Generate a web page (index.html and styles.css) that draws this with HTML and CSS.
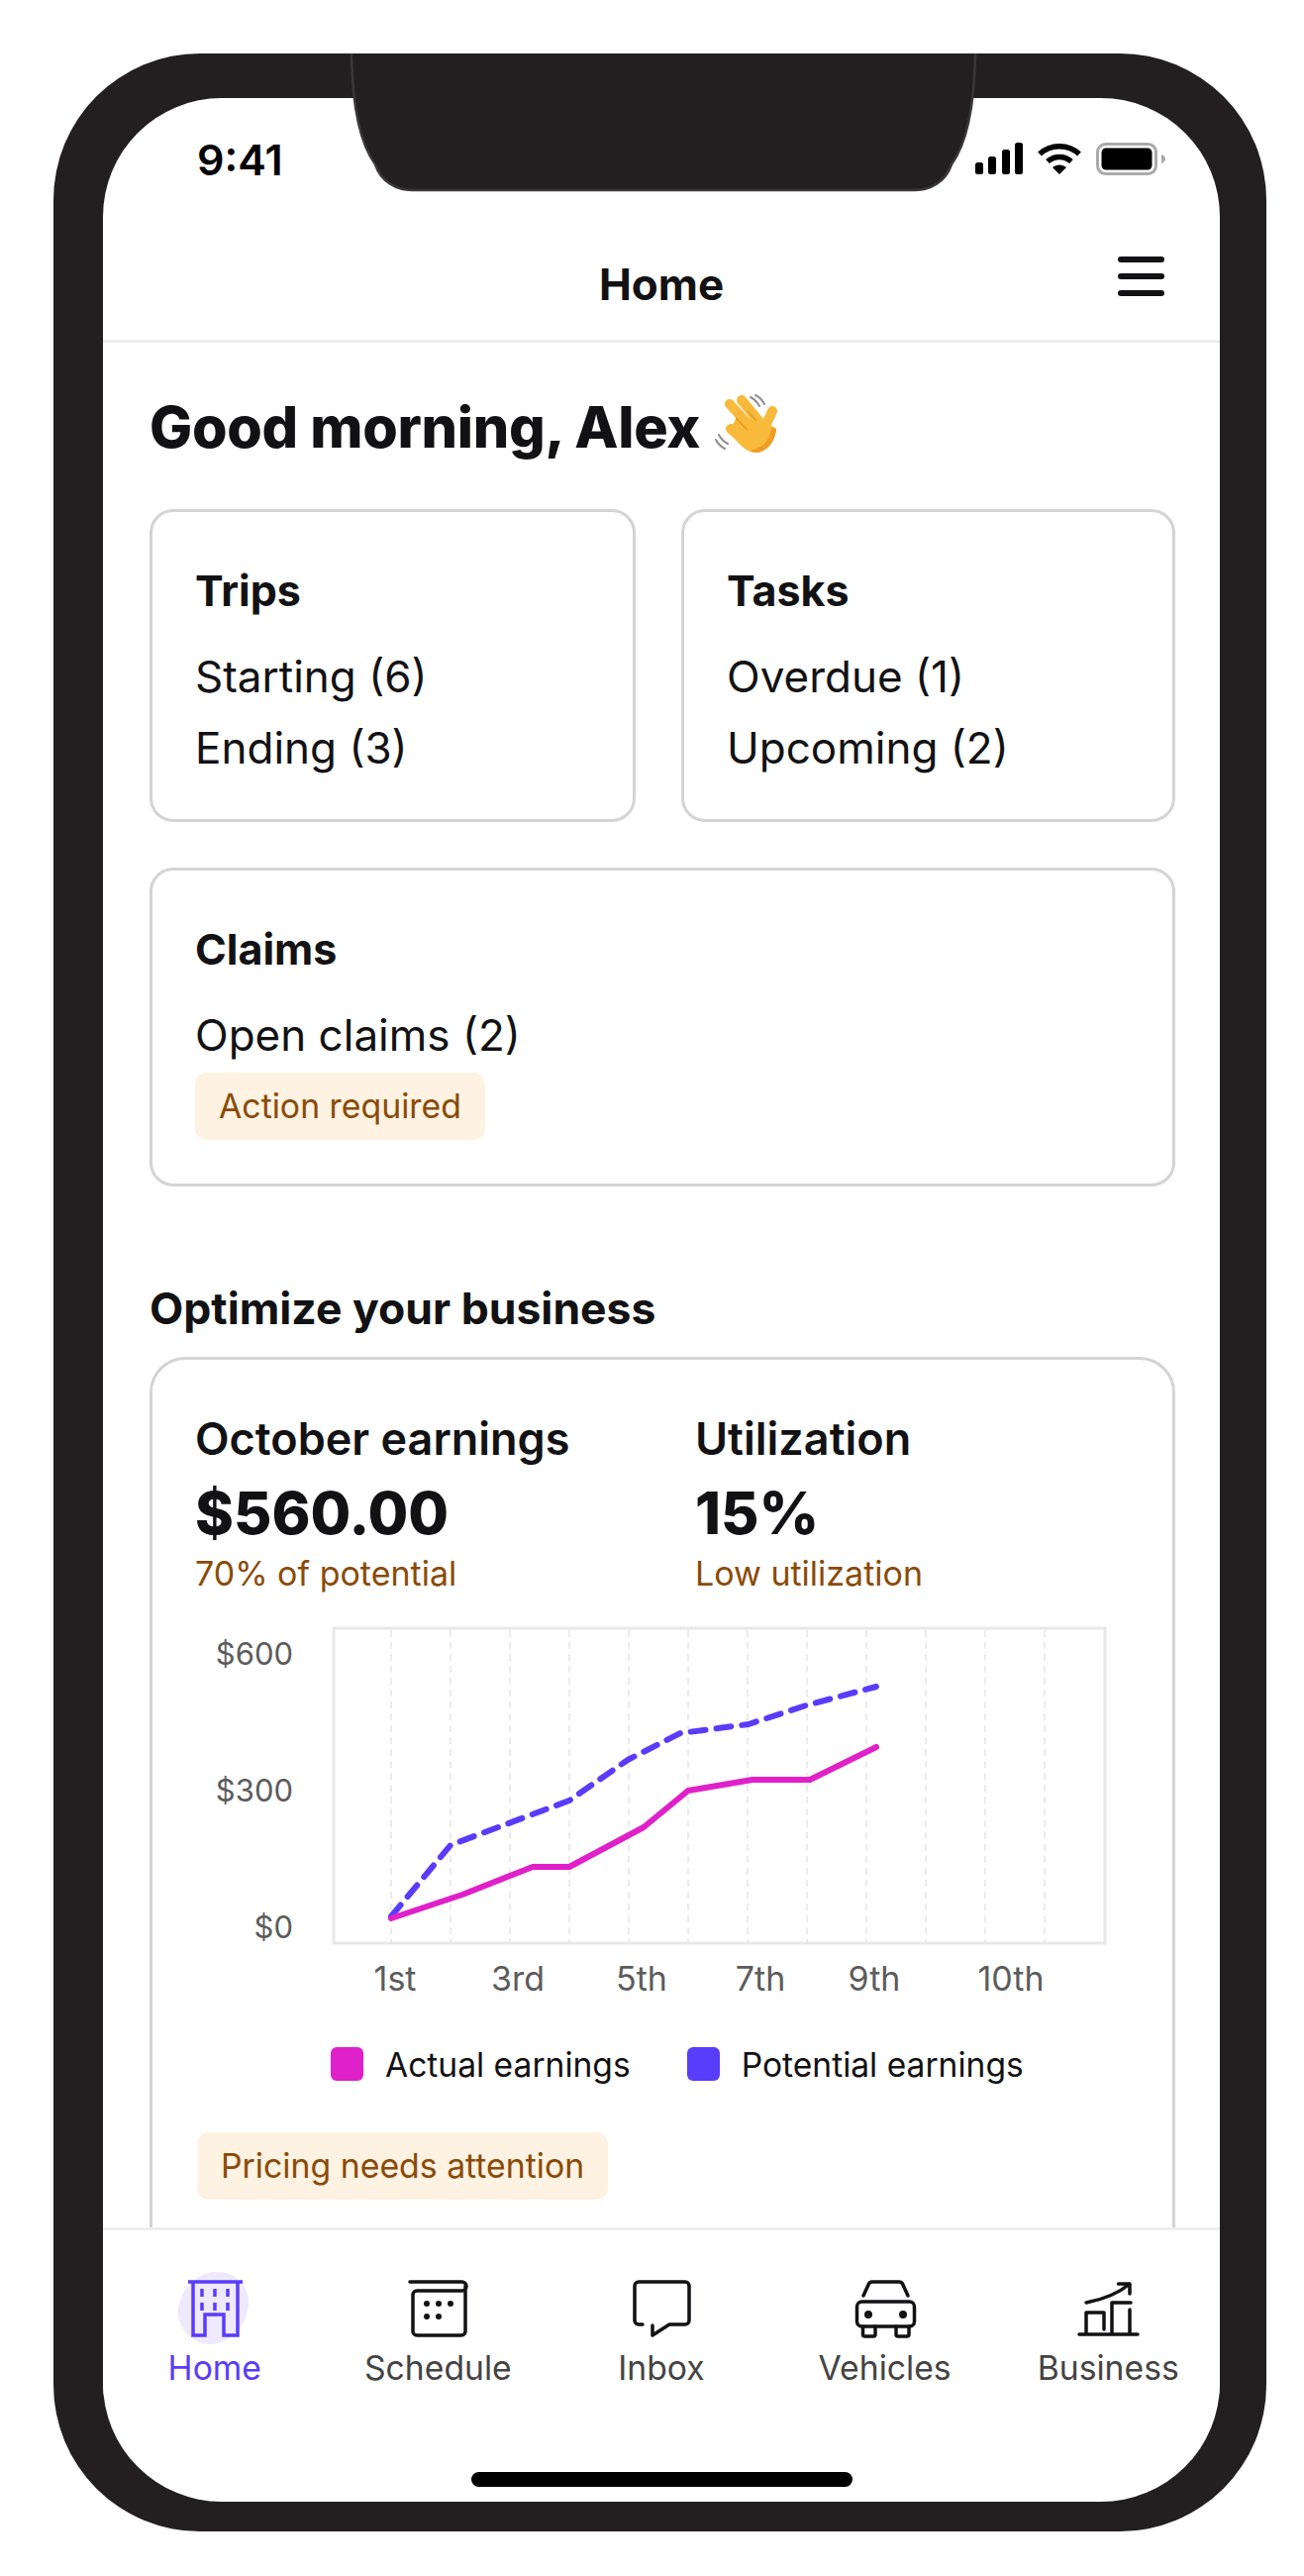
FILE: index.html
```html
<!DOCTYPE html>
<html lang="en">
<head>
<meta charset="utf-8">
<title>Home</title>
<link rel="stylesheet" href="styles.css">
</head>
<body>
<div class="phone">
  <svg class="notch" width="636" height="140" viewBox="0 0 636 140"><path d="M3 0V3C4 50 11 90 27 112 33 130 49 138 64 138H572C587 138 603 130 609 112 625 90 632 50 633 3V0" fill="#231f20" stroke="#38383a" stroke-width="2.500"/></svg>
  <div class="screen">
    <div class="status">
      <span class="time">9:41</span>
      <div class="status-icons">
        <svg class="sig" width="48" height="32" viewBox="0 0 48 32"><rect x="0" y="20" width="8" height="12" rx="2.5"/><rect x="13" y="14" width="8" height="18" rx="2.5"/><rect x="27" y="7" width="8" height="25" rx="2.5"/><rect x="40" y="0" width="8" height="32" rx="2.5"/></svg>
        <svg class="wifi" width="46" height="32" viewBox="0 0 46 32"><path d="M3 11.5C14 1 32 1 43 11.5" fill="none" stroke="#000" stroke-width="5.5"/><path d="M11 19C18 13 28 13 35 19" fill="none" stroke="#000" stroke-width="5.5"/><path d="M16 25c4-3.500 10-3.500 14 0L23 32z"/></svg>
        <svg class="batt" width="70" height="33" viewBox="0 0 70 33"><rect x="1.500" y="1.500" width="59" height="30" rx="8" fill="none" stroke="#aaa" stroke-width="3"/><rect x="5.500" y="5.500" width="51" height="22" rx="4.500"/><path d="M66 12c2.500.5 4 2.500 4 4.500s-1.500 4-4 4.500z" fill="#aaa"/></svg>
      </div>
    </div>
    <header class="nav">
      <span class="nav-title">Home</span>
      <div class="burger"><i></i><i></i><i></i></div>
    </header>
    <main class="content">
      <h1 class="greeting">Good morning, Alex
        <svg class="wave" width="70" height="70" viewBox="0 0 70 70">
          <g fill="none" stroke-linecap="round">
            <path d="M37 8c4 2 7 5 9 9M42 6c4 2 7 5 9 9M5 46c2 4 5 7 9 9M2 51c2 4 5 7 9 9" stroke="#8e8e8e" stroke-width="2"/>
            <g stroke="#f9b93a" stroke-width="10">
              <path d="M16 15 36 37M28 11 46 33M17 40 34 55M59 22 50 42"/>
            </g>
          </g>
          <path d="M24 26 50 32 63 40C62 52 54 64 42 64 34 64 26 58 16 42z" fill="#f9b93a"/>
          <path d="M42 64C54 64 62 52 63 40L58 38C58 50 50 60 36 62z" fill="#ee9c22"/>
          <path d="M22 29 34 41M34 22 43 32" fill="none" stroke="#e29a20" stroke-width="1.500"/>
        </svg>
      </h1>
      <div class="row">
        <section class="card trips">
          <h2 class="card-title">Trips</h2>
          <p class="line">Starting (6)</p>
          <p class="line">Ending (3)</p>
        </section>
        <section class="card tasks">
          <h2 class="card-title">Tasks</h2>
          <p class="line">Overdue (1)</p>
          <p class="line">Upcoming (2)</p>
        </section>
      </div>
      <section class="card claims">
        <h2 class="card-title">Claims</h2>
        <p class="line">Open claims (2)</p>
        <span class="badge">Action required</span>
      </section>
      <h2 class="section-title">Optimize your business</h2>
      <section class="biz">
        <div class="stats">
          <div class="stat earn">
            <div class="stat-label">October earnings</div>
            <div class="stat-value">$560.00</div>
            <div class="stat-note">70% of potential</div>
          </div>
          <div class="stat">
            <div class="stat-label">Utilization</div>
            <div class="stat-value">15%</div>
            <div class="stat-note">Low utilization</div>
          </div>
        </div>
        <svg class="chart" width="980" height="396" viewBox="197 1630 980 396">
          <rect class="plot" x="337" y="1644" width="779" height="318"/>
          <path class="gridline" d="M395 1646V1961M455 1646V1961M515 1646V1961M575 1646V1961M635 1646V1961M695 1646V1961M755 1646V1961M815 1646V1961M875 1646V1961M935 1646V1961M995 1646V1961M1055 1646V1961"/>
          <polyline class="potential" points="395,1935 455,1863 575,1818 634,1777 687,1750 756,1741 814,1722 885,1703"/>
          <polyline class="actual" points="395,1937 467,1913 538,1885 575,1885 650,1845 695,1808 760,1797 818,1797 885,1764"/>
          <text class="ylab" x="296" y="1681">$600</text>
          <text class="ylab" x="296" y="1819">$300</text>
          <text class="ylab" x="296" y="1957">$0</text>
          <text class="xlab" x="399" y="2010">1st</text>
          <text class="xlab" x="523" y="2010">3rd</text>
          <text class="xlab" x="648" y="2010">5th</text>
          <text class="xlab" x="768" y="2010">7th</text>
          <text class="xlab" x="883" y="2010">9th</text>
          <text class="xlab" x="1021" y="2010">10th</text>
        </svg>
        <div class="legend">
          <span class="key"><i class="swatch sw-actual"></i>Actual earnings</span>
          <span class="key"><i class="swatch sw-potential"></i>Potential earnings</span>
        </div>
        <span class="badge">Pricing needs attention</span>
      </section>
    </main>
    <nav class="tabs">
      <div class="tab active">
        <svg class="ico" width="64" height="64" viewBox="0 0 64 64">
          <path class="blob" d="M30 -4C50 -6 68 8 66 30 64 52 44 70 26 69 8 68-6 52-5 34-4 16 12-2 30-4z"/>
          <path class="st" d="M5 6H60M10 6V60H22V39H41V60H55V6M19 13V21M32 13V21M45 13V21M19 27V35M32 27V35M45 27V35"/>
        </svg>
        <span>Home</span>
      </div>
      <div class="tab">
        <svg class="ico" width="64" height="64" viewBox="0 0 64 64">
          <path class="st" d="M4 6H56.500a4.500 4.500 0 0 1 0 9H11a4 4 0 0 0-4 4V56a4 4 0 0 0 4 4H56a4 4 0 0 0 4-4V10"/>
          <g class="dots"><circle cx="21" cy="28" r="3"/><circle cx="33" cy="28" r="3"/><circle cx="45" cy="28" r="3"/><circle cx="21" cy="41" r="3"/><circle cx="33" cy="41" r="3"/></g>
        </svg>
        <span>Schedule</span>
      </div>
      <div class="tab">
        <svg class="ico" width="64" height="64" viewBox="0 0 64 64">
          <path class="st" d="M13 49H9a4 4 0 0 1-4-4V10a4 4 0 0 1 4-4H56a4 4 0 0 1 4 4V45a4 4 0 0 1-4 4H40L23 60V50"/>
        </svg>
        <span>Inbox</span>
      </div>
      <div class="tab">
        <svg class="ico" width="64" height="64" viewBox="0 0 64 64">
          <path class="st" d="M10 20 15 9Q16 6 19 6H46Q49 6 50 9L55 20"/>
          <rect class="st" x="3.500" y="26" width="58" height="25" rx="5"/>
          <path class="st" d="M9.500 51V59a2 2 0 0 0 2 2H20a2 2 0 0 0 2-2V51M43 51V59a2 2 0 0 0 2 2H54a2 2 0 0 0 2-2V51"/>
          <g class="dots"><circle cx="15" cy="39" r="4"/><circle cx="50" cy="39" r="4"/></g>
        </svg>
        <span>Vehicles</span>
      </div>
      <div class="tab">
        <svg class="ico" width="64" height="64" viewBox="0 0 64 64">
          <path class="st" d="M3 59H62M10 59V37H28V54M36 59V27H55M54 34V59M10 27C26 24 42 18 54 8M42.500 8H54V18"/>
        </svg>
        <span>Business</span>
      </div>
    </nav>
    <div class="home-bar"><i></i></div>
  </div>
</div>
</body>
</html>
```

FILE: styles.css
```css
* { box-sizing: border-box; }
html, body { margin: 0; padding: 0; background: #fff; }
body { font-family: Inter, "Liberation Sans", sans-serif; color: #121214; height: 2601px; overflow: hidden; }

.phone {
  position: relative;
  width: 1225px;
  height: 2502px;
  margin: 54px 0 0 54px;
  padding: 45px 47px 30px 50px;
  background: #231f20;
  border-radius: 148px;
}
.notch {
  position: absolute;
  left: 298px;
  top: 0;
  display: block;
}
.screen {
  display: flex;
  flex-direction: column;
  height: 100%;
  background: #fff;
  border-radius: 120px;
  overflow: hidden;
}

.status {
  height: 111px;
  flex: none;
  display: flex;
  justify-content: space-between;
  align-items: flex-end;
  padding: 0 55px 0 95px;
}
.time { font-size: 43px; font-weight: 600; line-height: 46px; color: #000; padding-bottom: 26px; }
.status-icons { display: flex; align-items: flex-start; gap: 14px; padding-bottom: 33px; }
.status-icons svg { display: block; fill: #000; }

.nav {
  position: relative;
  flex: none;
  height: 136px;
  padding-top: 20px;
  border-bottom: 3px solid #eeeeee;
  display: flex;
  align-items: center;
  justify-content: center;
}
.nav-title { font-size: 44px; font-weight: 700; }
.burger {
  position: absolute;
  right: 56px;
  top: 49px;
  width: 47px;
  display: flex;
  flex-direction: column;
  gap: 11px;
}
.burger i { display: block; height: 6px; border-radius: 3px; background: #121214; }

.content {
  flex: 1;
  min-height: 0;
  overflow: hidden;
  padding: 0 45px 0 47px;
}
.greeting {
  display: flex;
  align-items: center;
  gap: 14px;
  margin: 50px 0 0;
  height: 70px;
  font-size: 57.500px;
  font-weight: 800;
  line-height: 70px;
  letter-spacing: -0.3px;
}
.wave { flex: none; margin-top: -6px; }

.row { display: flex; gap: 46px; margin-top: 48px; }
.card {
  border: 3px solid #d4d4d4;
  border-radius: 24px;
  padding: 54px 43px 0;
}
.trips { width: 491px; height: 316px; }
.tasks { width: 499px; height: 316px; }
.claims { margin-top: 46px; height: 322px; }
.card-title { margin: 0 0 26px; font-size: 43px; line-height: 50px; font-weight: 700; }
.line { margin: 0; font-size: 44px; line-height: 72px; font-weight: 400; }

.badge {
  display: inline-block;
  height: 68px;
  line-height: 68px;
  padding: 0 24px;
  border-radius: 12px;
  background: #fef2e2;
  color: #8a4b08;
  font-size: 33.800px;
}
.claims .badge { margin-top: 2px; }

.section-title { margin: 98px 0 0; font-size: 44.500px; line-height: 50px; font-weight: 700; }
.biz {
  margin-top: 24px;
  height: 1100px;
  border: 3px solid #d4d4d4;
  border-radius: 36px;
  padding: 55px 0 0 43px;
}
.stats { display: flex; }
.earn { width: 505px; }
.stat-label { font-size: 45px; line-height: 50px; font-weight: 600; }
.stat-value { font-size: 59px; line-height: 72px; font-weight: 800; margin-top: 14px; }
.stat-note { font-size: 34px; line-height: 42px; color: #8a4b08; margin-top: 4px; }

.chart { display: block; margin-top: 20px; }
.plot { fill: #fff; stroke: #e8e8e8; stroke-width: 3; }
.gridline { fill: none; stroke: #e6e6e6; stroke-width: 1.5; stroke-dasharray: 7 5; }
.potential { fill: none; stroke: #593cfb; stroke-width: 6; stroke-dasharray: 15 11; stroke-linecap: round; stroke-linejoin: round; }
.actual { fill: none; stroke: #e020c8; stroke-width: 6; stroke-linejoin: round; stroke-linecap: round; }
.ylab { font-size: 31px; fill: #5c5c5c; text-anchor: end; }
.xlab { font-size: 34px; fill: #5c5c5c; text-anchor: middle; }

.legend { display: flex; gap: 57px; margin: 41px 0 0 137px; height: 34px; align-items: center; font-size: 33.600px; color: #121214; }
.key { display: flex; align-items: center; gap: 22px; }
.swatch { display: block; width: 33px; height: 34px; border-radius: 6px; }
.sw-actual { background: #e020c8; }
.sw-potential { background: #593cfb; }
.biz > .badge { margin-top: 52px; margin-left: 2px; }

.tabs {
  flex: none;
  height: 168px;
  display: grid;
  grid-template-columns: repeat(5, 1fr);
  background: #fff;
  border-top: 3px solid #eeeeee;
  padding-top: 46px;
}
.tab { display: flex; flex-direction: column; align-items: center; color: #444; font-size: 33.700px; line-height: 40px; }
.tab span { margin-top: 9px; }
.ico { display: block; overflow: visible; }
.st { fill: none; stroke: #121214; stroke-width: 3.500; stroke-linecap: round; stroke-linejoin: round; }
.dots { fill: #121214; }
.active { color: #593cfb; }
.active .st { stroke: #593cfb; stroke-linecap: butt; stroke-linejoin: miter; }
.blob { fill: #efe9fd; }

.home-bar { flex: none; height: 109px; display: flex; align-items: flex-end; justify-content: center; padding-bottom: 15px; }
.home-bar i { display: block; width: 385px; height: 15px; border-radius: 8px; background: #000; }
```
